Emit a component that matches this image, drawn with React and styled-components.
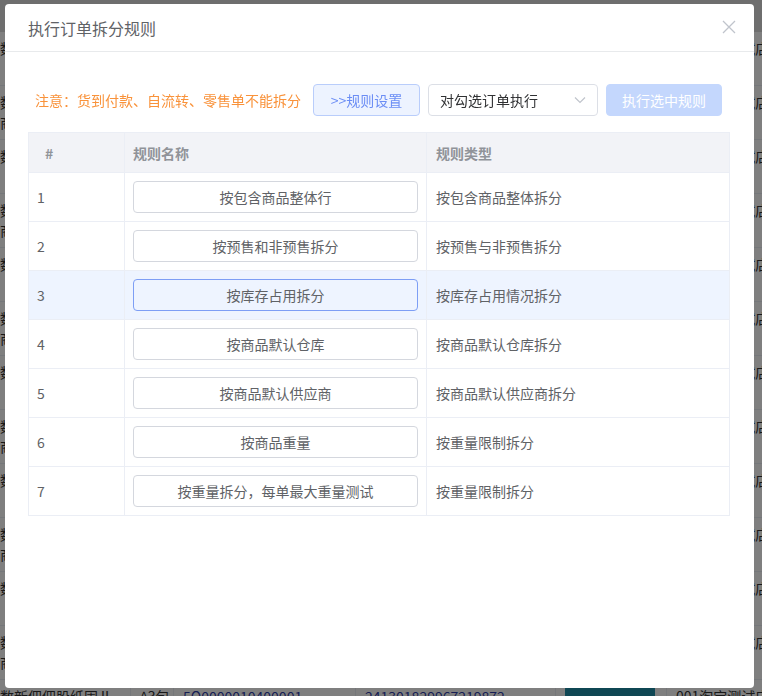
import React from "react";
import styled, { createGlobalStyle } from "styled-components";

const GlobalStyle = createGlobalStyle`
  * { box-sizing: border-box; }
  body {
    margin: 0;
    background: #fff;
    font-family: "Noto Sans CJK SC", "Liberation Sans", sans-serif;
    font-size: 14px;
    color: #606266;
    overflow: hidden;
  }
`;

/* ---------- page underneath the dialog ---------- */

const Page = styled.div`
  width: 762px;
  height: 696px;
  overflow: hidden;
`;

const PageTop = styled.div`
  height: 32px;
  background: #dcdcdc;
`;

const PageRow = styled.div`
  display: grid;
  grid-template-columns: 130px 43px 182px 200px 111px 1fr;
  height: 54px;
  border-bottom: 1px solid #ebeef5;
`;

const PageCell = styled.div`
  padding: 6px ${(p) => (p.$first ? "0" : "9px")};
  border-left: ${(p) => (p.$first ? "none" : "1px solid #ebeef5")};
  color: ${(p) => (p.$link ? "#2d3da8" : "#333")};
  font-size: 14px;
  line-height: 20px;
  white-space: nowrap;
  overflow: hidden;
`;

const TealButton = styled.div`
  width: 90px;
  height: 26px;
  margin-top: 6px;
  border-radius: 3px;
  background: #1e8fa8;
`;

/* ---------- dialog ---------- */

const Mask = styled.div`
  position: fixed;
  inset: 0;
  background: rgba(0, 0, 0, 0.5);
`;

const Dialog = styled.div`
  position: fixed;
  left: 5px;
  top: 4px;
  width: 749px;
  height: 684px;
  background: #fff;
  border-radius: 4px;
  display: flex;
  flex-direction: column;
`;

const Header = styled.div`
  height: 48px;
  padding: 0 18px 0 23px;
  display: flex;
  align-items: center;
  justify-content: space-between;
  border-bottom: 1px solid #e8eaec;
`;

const Title = styled.div`
  font-size: 16px;
  color: #606266;
  line-height: 22px;
`;

const Close = styled.div`
  width: 14px;
  height: 14px;
  display: flex;
  margin-top: -1px;
`;

const Body = styled.div`
  padding: 32px 24px 0 23px;
  display: flex;
  flex-direction: column;
  gap: 16px;
`;

const Toolbar = styled.div`
  display: flex;
  align-items: center;
  padding-left: 7px;
  height: 32px;
`;

const Notice = styled.div`
  color: #f9923a;
  font-size: 14px;
  margin-right: 12px;
  white-space: nowrap;
`;

const Button = styled.div`
  height: 32px;
  width: ${(p) => p.$w}px;
  display: flex;
  align-items: center;
  justify-content: center;
  border-radius: 4px;
  font-size: 14px;
  border: 1px solid ${(p) => (p.$plain ? "#b9cdfb" : "#c4d7fd")};
  background: ${(p) => (p.$plain ? "#edf3ff" : "#c4d7fd")};
  color: ${(p) => (p.$plain ? "#6b8df5" : "#fff")};
`;

const Select = styled.div`
  height: 32px;
  width: 170px;
  margin: 0 8px;
  padding: 0 11px 0 11px;
  border: 1px solid #dcdfe6;
  border-radius: 4px;
  display: flex;
  align-items: center;
  justify-content: space-between;
  color: #303133;
  font-size: 14px;
`;

const Table = styled.div`
  border: 1px solid #ebeef5;
  border-bottom: none;
  width: 702px;
`;

const Row = styled.div`
  display: grid;
  grid-template-columns: 95px 302px 1fr;
  height: ${(p) => (p.$head ? 40 : 49)}px;
  background: ${(p) => (p.$head ? "#f2f3f7" : p.$active ? "#eef4ff" : "#fff")};
  border-bottom: 1px solid #ebeef5;
`;

const Cell = styled.div`
  display: flex;
  align-items: center;
  padding: 0 8px 0 ${(p) => p.$pl || 8}px;
  border-left: ${(p) => (p.$first ? "none" : "1px solid #ebeef5")};
  font-size: 14px;
  font-weight: ${(p) => (p.$head ? 700 : 400)};
  color: ${(p) => (p.$head ? "#909399" : "#606266")};
  white-space: nowrap;
`;

const RuleButton = styled.div`
  width: 100%;
  height: 32px;
  display: flex;
  align-items: center;
  justify-content: center;
  border-radius: 4px;
  border: 1px solid ${(p) => (p.$active ? "#7d9ef5" : "#d4d7de")};
  background: ${(p) => (p.$active ? "#eef4ff" : "#fff")};
  color: #606266;
  font-size: 14px;
`;

const rules = [
  { id: 1, name: "按包含商品整体行", type: "按包含商品整体拆分" },
  { id: 2, name: "按预售和非预售拆分", type: "按预售与非预售拆分" },
  { id: 3, name: "按库存占用拆分", type: "按库存占用情况拆分", active: true },
  { id: 4, name: "按商品默认仓库", type: "按商品默认仓库拆分" },
  { id: 5, name: "按商品默认供应商", type: "按商品默认供应商拆分" },
  { id: 6, name: "按商品重量", type: "按重量限制拆分" },
  { id: 7, name: "按重量拆分，每单最大重量测试", type: "按重量限制拆分" },
];

const pageRows = Array.from({ length: 13 }, (_, i) => i);

const App = () => {
  return (
    <>
      <GlobalStyle />
      <Page>
        <PageTop />
        {pageRows.map((i) => (
          <PageRow key={i}>
            <PageCell $first>
              数新佃佃股纸固Ⅱ...
              <br />
              {i % 2 ? "商品名称" : ""}
            </PageCell>
            <PageCell>^3包</PageCell>
            <PageCell $link>5Q0000010400001</PageCell>
            <PageCell $link>241301829967219872</PageCell>
            <PageCell>
              <TealButton style={{ marginTop: 0 }} />
            </PageCell>
            <PageCell>001淘宝测试店</PageCell>
          </PageRow>
        ))}
      </Page>
      <Mask />
      <Dialog>
        <Header>
          <Title>执行订单拆分规则</Title>
          <Close>
            <svg width="14" height="14" viewBox="0 0 14 14">
              <path
                d="M1 1 L13 13 M13 1 L1 13"
                stroke="#c0c4cc"
                strokeWidth="1.3"
                fill="none"
              />
            </svg>
          </Close>
        </Header>
        <Body>
          <Toolbar>
            <Notice>注意：货到付款、自流转、零售单不能拆分</Notice>
            <Button $plain $w={107}>
              &gt;&gt;规则设置
            </Button>
            <Select>
              <span>对勾选订单执行</span>
              <svg width="12" height="8" viewBox="0 0 12 8">
                <path
                  d="M1 1.5 L6 6.5 L11 1.5"
                  stroke="#c0c4cc"
                  strokeWidth="1.2"
                  fill="none"
                />
              </svg>
            </Select>
            <Button $w={116}>执行选中规则</Button>
          </Toolbar>
          <Table>
            <Row $head>
              <Cell $head $first $pl={16}>
                #
              </Cell>
              <Cell $head>规则名称</Cell>
              <Cell $head $pl={9}>
                规则类型
              </Cell>
            </Row>
            {rules.map((r) => (
              <Row key={r.id} $active={r.active}>
                <Cell $first>{r.id}</Cell>
                <Cell>
                  <RuleButton $active={r.active}>{r.name}</RuleButton>
                </Cell>
                <Cell $pl={9}>{r.type}</Cell>
              </Row>
            ))}
          </Table>
        </Body>
      </Dialog>
    </>
  );
};

export default App;
